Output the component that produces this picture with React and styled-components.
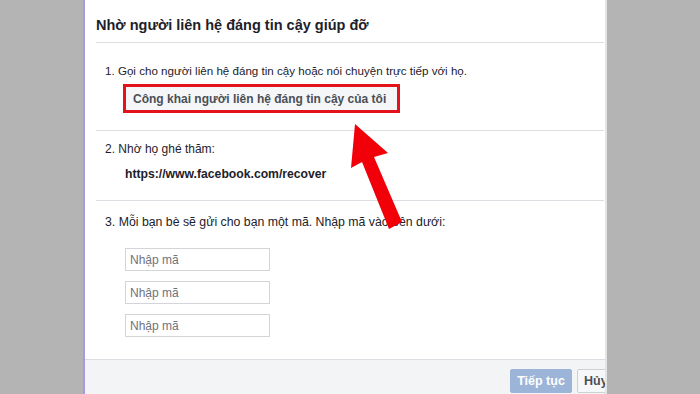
import React from "react";
import styled, { createGlobalStyle } from "styled-components";

const Global = createGlobalStyle`
  html, body { margin: 0; padding: 0; background: #b4b4b4; }
  body { font-family: "Liberation Sans", Arial, sans-serif; }
  * { box-sizing: border-box; }
`;

const Page = styled.div`
  position: relative;
  width: 700px;
  height: 394px;
  overflow: hidden;
  display: flex;
  background: #b4b4b4;
`;

const Side = styled.div`
  width: ${(p) => p.$w}px;
  flex: none;
  background: #b4b4b4;
`;

const Dialog = styled.div`
  width: 524px;
  height: 394px;
  flex: none;
  background: #fff;
  border-left: 2px solid #a899e2;
  border-right: 2px solid #e4e4e4;
  overflow: hidden;
  display: flex;
  flex-direction: column;
`;

const Header = styled.div`
  margin-left: 11px;
  margin-right: 1px;
  padding: 15px 0 7px;
  border-bottom: 1px solid #dadde1;
  font-size: 14.5px;
  font-weight: 700;
  color: #1d2129;
  line-height: 20px;
  white-space: nowrap;
`;

const Section = styled.div`
  margin-left: 11px;
  margin-right: 1px;
  padding: ${(p) => p.$pt}px 0 ${(p) => p.$pb}px 9px;
  border-bottom: ${(p) => (p.$last ? "none" : "1px solid #dadde1")};
  display: flex;
  flex-direction: column;
`;

const Line = styled.div`
  font-size: ${(p) => p.$size || 12}px;
  line-height: 18px;
  color: #1d2129;
  white-space: nowrap;
`;

const Url = styled.div`
  margin: 7px 0 0 20px;
  font-size: 12.2px;
  line-height: 18px;
  font-weight: 700;
  color: #1d2129;
  white-space: nowrap;
`;

const Highlight = styled.div`
  align-self: flex-start;
  margin: 4px 0 0 18px;
  width: 277px;
  height: 29px;
  border: 3px solid #e3121b;
  background: #f5f6f7;
  display: flex;
  align-items: center;
  padding-left: 7px;
  font-size: 12px;
  font-weight: 700;
  color: #4b4f56;
  white-space: nowrap;
`;

const Inputs = styled.div`
  margin: 17px 0 0 20px;
  display: flex;
  flex-direction: column;
  gap: 10px;
`;

const CodeInput = styled.input`
  width: 145px;
  height: 23px;
  border: 1px solid #d3d5d9;
  padding: 0 4px;
  font-family: "Liberation Sans", Arial, sans-serif;
  font-size: 12px;
  color: #1d2129;
  outline: none;
  &::placeholder { color: #6f737b; }
`;

const Footer = styled.div`
  margin-top: auto;
  height: 35px;
  border-top: 1px solid #dadde1;
  background: #f3f4f6;
  display: flex;
  justify-content: flex-end;
  align-items: flex-start;
  gap: 5px;
  padding-top: 9px;
  margin-right: -20px;
`;

const Button = styled.button`
  height: 24px;
  padding: ${(p) => (p.$primary ? "0" : "0 0 0 6px")};
  text-align: ${(p) => (p.$primary ? "center" : "left")};
  border: 1px solid ${(p) => (p.$primary ? "#9cb4d8" : "#ced0d4")};
  background: ${(p) => (p.$primary ? "#9cb4d8" : "#f6f7f9")};
  color: ${(p) => (p.$primary ? "#fff" : "#4b4f56")};
  font-family: "Liberation Sans", Arial, sans-serif;
  font-size: 12.5px;
  font-weight: 700;
  border-radius: 2px;
  white-space: nowrap;
  width: ${(p) => p.$w}px;
`;

const ArrowSvg = styled.svg`
  position: absolute;
  left: 0;
  top: 0;
  pointer-events: none;
`;

export default function App() {
  return (
    <>
      <Global />
      <Page>
        <Side $w={83} />
        <Dialog>
          <Header>Nhờ người liên hệ đáng tin cậy giúp đỡ</Header>
          <Section $pt={19} $pb={17}>
            <Line $size={11.6}>1. Gọi cho người liên hệ đáng tin cậy hoặc nói chuyện trực tiếp với họ.</Line>
            <Highlight>Công khai người liên hệ đáng tin cậy của tôi</Highlight>
          </Section>
          <Section $pt={9} $pb={17}>
            <Line>2. Nhờ họ ghé thăm:</Line>
            <Url>https://www.facebook.com/recover</Url>
          </Section>
          <Section $pt={12} $pb={0} $last>
            <Line $size={12.3}>3. Mỗi bạn bè sẽ gửi cho bạn một mã. Nhập mã vào bên dưới:</Line>
            <Inputs>
              <CodeInput placeholder="Nhập mã" />
              <CodeInput placeholder="Nhập mã" />
              <CodeInput placeholder="Nhập mã" />
            </Inputs>
          </Section>
          <Footer>
            <Button $primary $w={62}>Tiếp tục</Button>
            <Button $w={48}>Hủy</Button>
          </Footer>
        </Dialog>
        <Side $w={93} />
        <ArrowSvg width="700" height="394" viewBox="0 0 700 394">
          <polygon
            points="355,124 388,153 374,157 402,222 389,229 362,162 351,168"
            fill="#f2000a"
          />
        </ArrowSvg>
      </Page>
    </>
  );
}
